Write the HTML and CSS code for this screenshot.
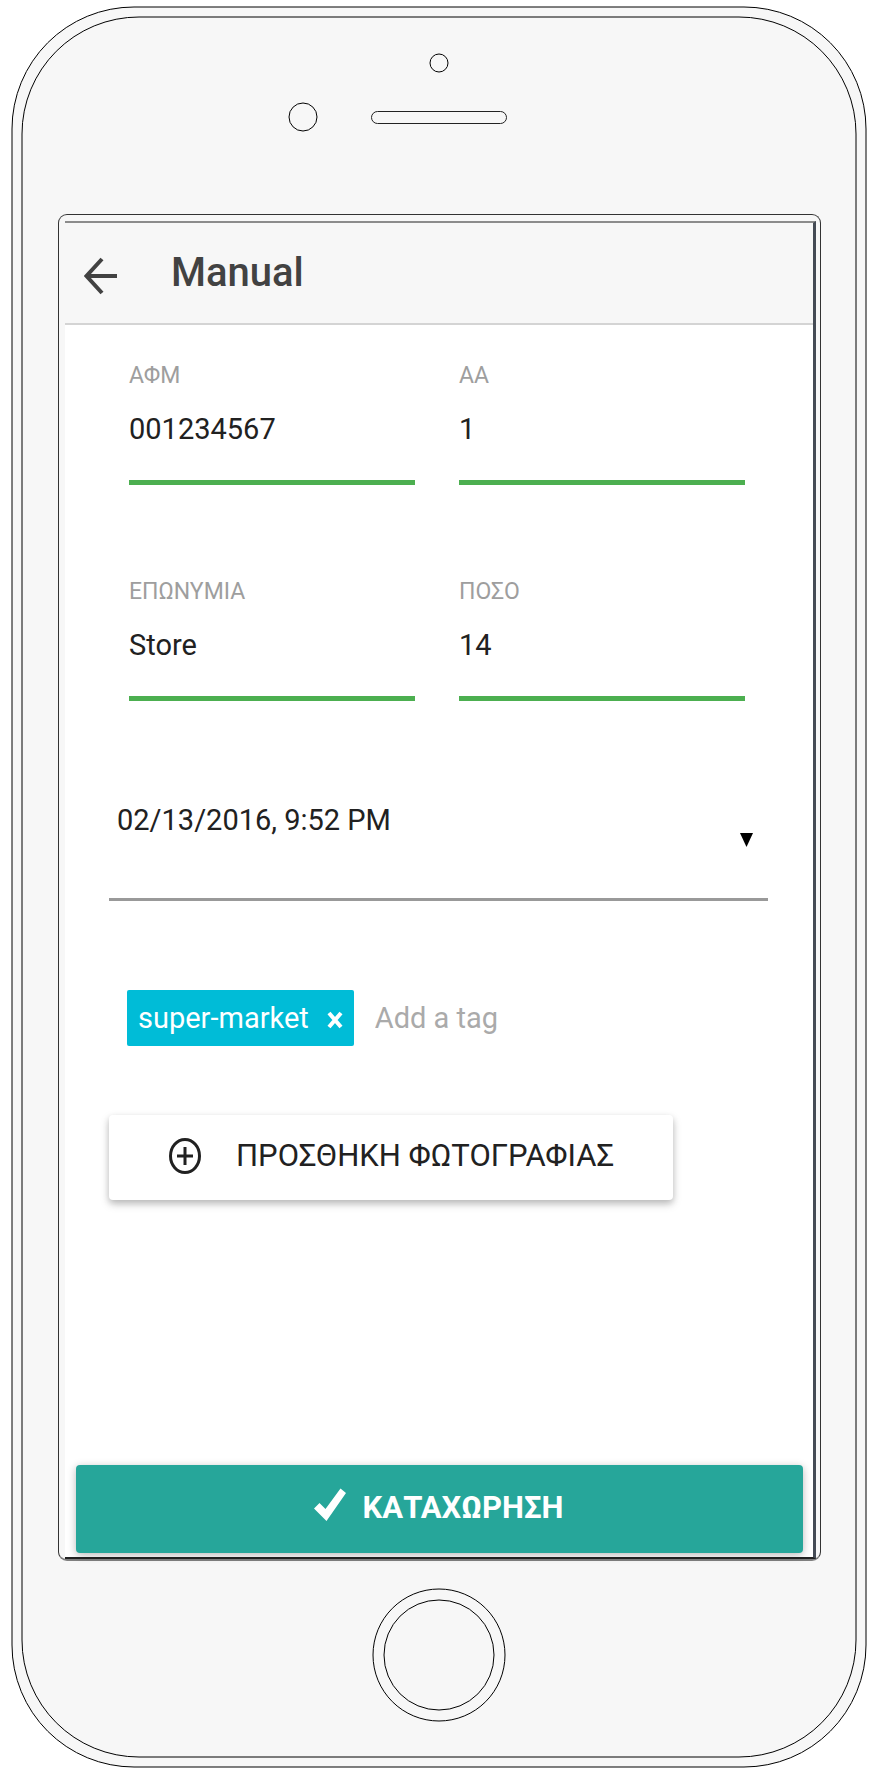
FILE: index.html
```html
<!DOCTYPE html>
<html lang="el">
<head>
<meta charset="utf-8">
<meta name="viewport" content="width=device-width, initial-scale=1">
<title>Manual</title>
<link rel="stylesheet" href="styles.css">
</head>
<body>
<div class="phone">
  <svg class="phone-outline" aria-hidden="true">
    <rect class="outline-outer"/>
    <rect class="outline-inner"/>
  </svg>

  <div class="phone-top">
    <svg class="camera" width="20" height="20" viewBox="0 0 20 20" aria-hidden="true"><circle cx="10" cy="10" r="9"/></svg>
    <div class="ear-row">
      <svg class="sensor" width="30" height="30" viewBox="0 0 30 30" aria-hidden="true"><circle cx="15" cy="15" r="14"/></svg>
      <div class="speaker"></div>
    </div>
  </div>

  <div class="screen">
    <div class="app">
      <header class="app-bar">
        <button class="back" type="button" aria-label="Back">
          <svg width="34" height="38" viewBox="0 0 34 38" aria-hidden="true"><path d="M18 2 2.500 19 18 36M3 19h30"/></svg>
        </button>
        <h1 class="title">Manual</h1>
      </header>

      <form class="form">
        <div class="fields">
          <div class="field">
            <label for="afm">ΑΦΜ</label>
            <input id="afm" type="text" value="001234567">
          </div>
          <div class="field">
            <label for="aa">ΑΑ</label>
            <input id="aa" type="text" value="1">
          </div>
          <div class="field">
            <label for="name">ΕΠΩΝΥΜΙΑ</label>
            <input id="name" type="text" value="Store">
          </div>
          <div class="field">
            <label for="amount">ΠΟΣΟ</label>
            <input id="amount" type="text" value="14">
          </div>
        </div>

        <div class="date">
          <select class="date-select" aria-label="Date">
            <option>02/13/2016, 9:52 PM</option>
          </select>
          <svg class="caret" width="13" height="14" viewBox="0 0 13 14" aria-hidden="true"><path d="M0 0h13L6.500 14z"/></svg>
        </div>

        <div class="tags">
          <span class="tag">super-market
            <button class="tag-remove" type="button" aria-label="Remove super-market">
              <svg width="16" height="18" viewBox="0 0 16 18" aria-hidden="true"><path d="M2 2 14 16M14 2 2 16"/></svg>
            </button>
          </span>
          <input class="tag-input" type="text" placeholder="Add a tag" aria-label="Add a tag">
        </div>

        <button class="photo" type="button">
          <svg width="32" height="36" viewBox="0 0 32 36" aria-hidden="true"><ellipse cx="16" cy="18" rx="14.500" ry="16.500"/><path d="M16 9v18M8 18h16"/></svg>
          ΠΡΟΣΘΗΚΗ ΦΩΤΟΓΡΑΦΙΑΣ
        </button>

        <button class="submit" type="submit">
          <svg width="32" height="34" viewBox="0 0 32 34" aria-hidden="true"><path d="M0 20.500 5.500 15 11.500 21 26.500 0.500 32 5 12.500 33z"/></svg>
          ΚΑΤΑΧΩΡΗΣΗ
        </button>
      </form>
    </div>
  </div>

  <div class="phone-bottom">
    <svg width="134" height="134" viewBox="0 0 134 134" aria-hidden="true"><circle cx="67" cy="67" r="66"/><circle cx="67" cy="67" r="55"/></svg>
  </div>
</div>
</body>
</html>
```
FILE: styles.css
```css
* {
  box-sizing: border-box;
}

body {
  margin: 0;
  padding: 6px 6px 7px 11px;
  background: #fff;
  color: #212121;
  font-family: Roboto, sans-serif;
  font-size: 29px;
  line-height: 36px;
}

button,
input,
select {
  margin: 0;
  padding: 0;
  border: 0;
  background: none;
  color: inherit;
  font: inherit;
}

svg {
  display: block;
  flex: none;
}

/* Device */

.phone {
  position: relative;
  display: flex;
  flex-direction: column;
  min-height: calc(100vh - 13px);
  padding: 0 46px 0 47px;
}

.phone-outline {
  position: absolute;
  inset: 0;
  z-index: -1;
  width: 100%;
  height: 100%;
}

.phone-outline rect {
  fill: #f7f7f7;
  stroke: #000;
}

.outline-outer {
  x: 1px;
  y: 1px;
  width: calc(100% - 2px);
  height: calc(100% - 2px);
  rx: 122px;
}

.outline-inner {
  x: 11px;
  y: 11px;
  width: calc(100% - 22px);
  height: calc(100% - 22px);
  rx: 117px;
}

.phone-top {
  display: flex;
  flex-direction: column;
  align-items: center;
  gap: 29px;
  height: 208px;
  padding: 47px 2px 0 0;
}

.phone-top circle,
.phone-bottom circle {
  fill: none;
  stroke: #000;
}

.ear-row {
  display: grid;
  grid-template-columns: 1fr 136px 1fr;
  align-items: center;
  column-gap: 53px;
  width: 100%;
}

.sensor {
  justify-self: end;
}

.speaker {
  height: 13px;
  border: 1px solid #222;
  border-radius: 7px;
}

.phone-bottom {
  display: flex;
  justify-content: center;
  height: 207px;
  padding: 27px 2px 0 0;
}

.screen {
  display: flex;
  flex: 1;
  padding: 6px 4px 0 6px;
  border: 1px solid #333;
  border-bottom: 2px solid #808080;
  border-radius: 9px;
}

.app {
  display: flex;
  flex: 1;
  flex-direction: column;
  min-width: 0;
  border-top: 2px solid #8c8c8c;
  border-right: 3px solid #454b55;
  border-bottom: 2px solid #222;
  background: #fff;
}

/* App bar */

.app-bar {
  display: flex;
  align-items: center;
  gap: 53px;
  height: 102px;
  padding-left: 19px;
  border-bottom: 2px solid #d4d4d4;
  background: #f7f7f7;
}

.back {
  padding-top: 6px;
  cursor: pointer;
}

.back path {
  fill: none;
  stroke: #424242;
  stroke-width: 4;
}

.title {
  margin: 0;
  color: #424242;
  font-size: 40px;
  font-weight: 500;
  line-height: 48px;
}

/* Form */

.form {
  display: flex;
  flex: 1;
  flex-direction: column;
  padding-bottom: 4px;
}

.fields {
  display: grid;
  grid-template-columns: 1fr 1fr;
  gap: 92px 44px;
  padding: 36px 68px 0 64px;
}

.field {
  display: flex;
  flex-direction: column;
  gap: 18px;
  min-width: 0;
}

.field label {
  color: #9e9e9e;
  font-size: 23px;
  line-height: 30px;
}

.field input {
  width: 100%;
  height: 76px;
  padding-bottom: 32px;
  border-bottom: 5px solid #4caf50;
}

.date {
  display: flex;
  align-items: center;
  margin: 84px 45px 0 44px;
  padding: 0 15px 0 8px;
  border-bottom: 3px solid #999;
}

.date-select {
  flex: 1;
  height: 113px;
  padding-bottom: 44px;
  appearance: none;
}

.caret {
  margin-bottom: 4px;
}

.tags {
  display: flex;
  align-items: center;
  gap: 21px;
  margin: 89px 64px 0 62px;
}

.tag {
  display: flex;
  align-items: center;
  gap: 18px;
  height: 56px;
  padding: 0 11px;
  border-radius: 2px;
  background: #00bcd7;
  color: #fff;
}

.tag-remove {
  padding-top: 4px;
  cursor: pointer;
}

.tag-remove path {
  fill: none;
  stroke: #fff;
  stroke-width: 4;
}

.tag-input {
  flex: 1;
  min-width: 0;
}

.tag-input::placeholder {
  color: #aaa;
  opacity: 1;
}

.photo {
  display: flex;
  align-items: center;
  align-self: flex-start;
  gap: 35px;
  height: 85px;
  margin: 69px 0 48px 44px;
  padding: 0 59px 4px 60px;
  border-radius: 4px;
  background: #fff;
  box-shadow: 0 4px 10px rgba(0, 0, 0, 0.18), 0 3px 6px rgba(0, 0, 0, 0.14);
  font-size: 31px;
  white-space: nowrap;
  cursor: pointer;
}

.photo svg {
  fill: none;
  stroke: #212121;
  stroke-width: 3;
}

.submit {
  display: flex;
  align-items: center;
  justify-content: center;
  gap: 17px;
  height: 88px;
  margin: auto 10px 0 11px;
  padding: 0 2px 2px 0;
  border-radius: 4px;
  background: #26a69a;
  box-shadow: 0 2px 8px rgba(0, 0, 0, 0.28);
  color: #fff;
  font-size: 31px;
  font-weight: 700;
  cursor: pointer;
}

.submit svg {
  margin-bottom: 6px;
  fill: #fff;
}
```
